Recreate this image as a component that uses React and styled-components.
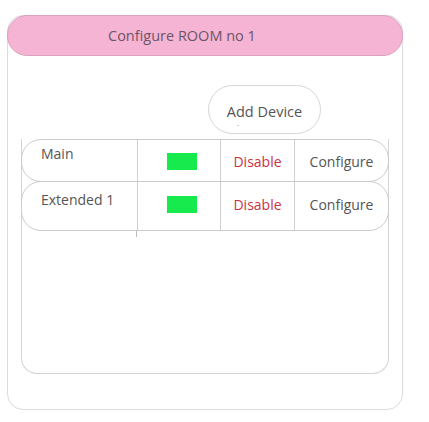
import React from "react"
import styled, { createGlobalStyle } from "styled-components"

const GlobalStyle = createGlobalStyle`
  body {
    margin: 0;
    background: #ffffff;
    font-family: "Open Sans", "Noto Sans", sans-serif;
  }
`

const devices = [
  { name: "Main", height: 43, nameTop: 4, shift: 0 },
  { name: "Extended 1", height: 50, nameTop: 8, shift: 6 },
]

const App = () => {
  return (
    <>
      <GlobalStyle />
      <StCard>
        <StHeader>Configure ROOM no 1</StHeader>
        <StActions>
          <StAddButton>
            Add Device
            <StTick>`</StTick>
          </StAddButton>
        </StActions>
        <StTable>
          {devices.map((d, i) => (
            <StRow key={d.name} $h={d.height} $first={i === 0}>
              <StNameCell $top={d.nameTop}>{d.name}</StNameCell>
              <StCell $shift={d.shift}>
                <StStatus />
              </StCell>
              <StCell $shift={d.shift}>
                <StDisable>Disable</StDisable>
              </StCell>
              <StCell $shift={d.shift}>
                <StConfigure>Configure</StConfigure>
              </StCell>
            </StRow>
          ))}
          <StStub />
        </StTable>
      </StCard>
    </>
  )
}

export default App

const StCard = styled.div`
  box-sizing: border-box;
  margin: 15px 0 0 7px;
  width: 396px;
  height: 395px;
  border: 1px solid #dcdcdc;
  border-radius: 16px;
  display: flex;
  flex-direction: column;
`

const StHeader = styled.div`
  box-sizing: border-box;
  margin: -1px -1px 0 -1px;
  height: 41px;
  background-color: #f5b4d4;
  border: 1px solid #dba2bf;
  border-radius: 20px;
  display: flex;
  align-items: center;
  padding-left: 100px;
  font-size: 14.5px;
  color: #6b5467;
`

const StActions = styled.div`
  display: flex;
  padding: 29px 0 0 200px;
`

const StAddButton = styled.div`
  position: relative;
  box-sizing: border-box;
  width: 113px;
  height: 49px;
  border: 1px solid #d6d6d6;
  border-radius: 25px;
  display: flex;
  align-items: center;
  justify-content: center;
  padding-top: 4px;
  font-size: 14.5px;
  color: #555555;
`

const StTick = styled.span`
  position: absolute;
  left: 28px;
  top: 37px;
  font-size: 8px;
  line-height: 8px;
  color: #777777;
`

const StTable = styled.div`
  box-sizing: border-box;
  margin: 5px 0 0 13px;
  width: 368px;
  height: 235px;
  border: 1px solid #d4d4d4;
  border-top: none;
  border-radius: 0 0 16px 16px;
  display: flex;
  flex-direction: column;
`

const StRow = styled.div`
  box-sizing: border-box;
  margin: ${(p) => (p.$first ? "0 -1px" : "-1px -1px 0 -1px")};
  height: ${(p) => p.$h}px;
  border: 1px solid #cbcbcb;
  border-radius: 20px;
  display: grid;
  grid-template-columns: 115px 83px 74px 1fr;
`

const StCell = styled.div`
  display: flex;
  align-items: center;
  justify-content: center;
  padding-top: 2px;
  padding-bottom: ${(p) => p.$shift}px;
  border-left: 1px solid #cfcfcf;
`

const StNameCell = styled.div`
  padding: ${(p) => p.$top}px 0 0 19px;
  font-size: 14px;
  color: #555555;
`

const StStatus = styled.div`
  margin-left: 5px;
  width: 30px;
  height: 17px;
  background-color: #17ea4c;
`

const StDisable = styled.span`
  font-size: 14px;
  color: #c93242;
`

const StConfigure = styled.span`
  font-size: 14px;
  color: #555555;
`

const StStub = styled.div`
  margin-left: 114px;
  width: 1px;
  height: 6px;
  background-color: #bdbdbd;
`
